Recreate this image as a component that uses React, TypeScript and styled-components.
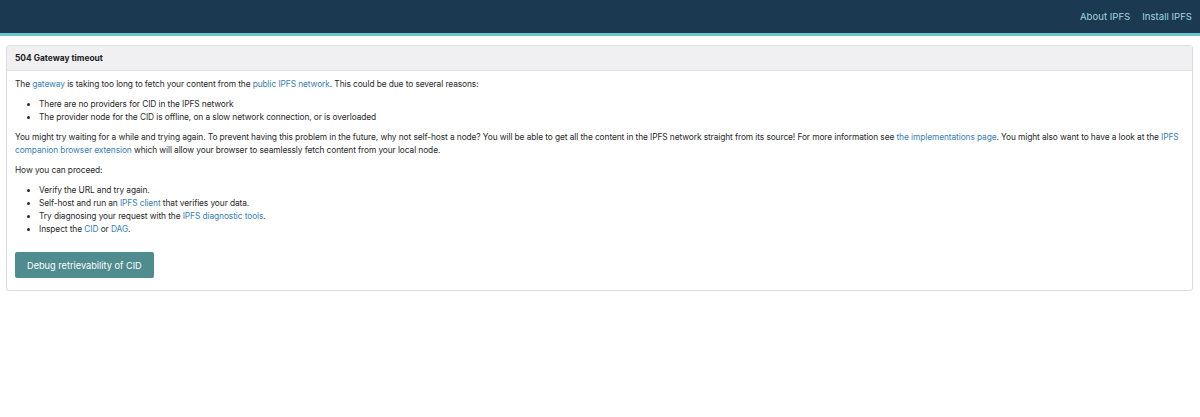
import React from "react";
import styled, { createGlobalStyle } from "styled-components";

const Global = createGlobalStyle`
  html, body { margin: 0; padding: 0; background: #ffffff; }
  body { font-family: Inter, "Noto Sans", "Liberation Sans", sans-serif; color: #222; }
  * { box-sizing: border-box; }
`;

const Header = styled.header`
  height: 36px;
  background: #1b3a52;
  border-bottom: 3px solid #6cc3cc;
  display: flex;
  align-items: center;
  justify-content: flex-end;
  padding: 0 8px 0 0;
  gap: 12px;
`;

const NavLink = styled.a`
  color: #9fd6dc;
  font-size: 9.6px;
  text-decoration: none;
  line-height: 1;
`;

const Main = styled.main`
  padding: 9px 7px 0 6px;
`;

const Card = styled.section`
  border: 1px solid #dcdde0;
  border-radius: 3px;
  background: #fff;
  box-shadow: 0 1px 2px rgba(0, 0, 0, 0.04);
`;

const CardHeader = styled.div`
  height: 25px;
  display: flex;
  align-items: center;
  padding: 0 8px;
  background: #f0f0f3;
  border-bottom: 1px solid #e1e2e6;
  font-size: 8.4px;
  font-weight: 700;
  color: #222;
`;

const CardBody = styled.div`
  padding: 7px 8px 12px;
  font-size: 8.4px;
  letter-spacing: -0.1px;
  line-height: 13px;
  color: #2a2a2a;
`;

const P = styled.p`
  margin: 0 0 7px;
`;

const List = styled.ul`
  margin: 0 0 7px;
  padding-left: 24px;
  list-style: disc;
`;

const Link = styled.a`
  color: #3b80b3;
  text-decoration: none;
`;

const Button = styled.button`
  display: block;
  margin-top: 16px;
  height: 26px;
  padding: 0 12px;
  border: none;
  border-radius: 2px;
  background: #4e8c90;
  color: #ffffff;
  font-family: inherit;
  font-size: 9.2px;
  letter-spacing: 0;
  cursor: pointer;
`;

export default function App() {
  return (
    <>
      <Global />
      <Header>
        <NavLink href="#">About IPFS</NavLink>
        <NavLink href="#">Install IPFS</NavLink>
      </Header>
      <Main>
        <Card>
          <CardHeader>504 Gateway timeout</CardHeader>
          <CardBody>
            <P>
              The <Link href="#">gateway</Link> is taking too long to fetch your content from the{" "}
              <Link href="#">public IPFS network</Link>. This could be due to several reasons:
            </P>
            <List>
              <li>There are no providers for CID in the IPFS network</li>
              <li>The provider node for the CID is offline, on a slow network connection, or is overloaded</li>
            </List>
            <P>
              You might try waiting for a while and trying again. To prevent having this problem in the future, why not
              self-host a node? You will be able to get all the content in the IPFS network straight from its source! For
              more information see <Link href="#">the implementations page</Link>. You might also want to have a look at
              the <Link href="#">IPFS companion browser extension</Link> which will allow your browser to seamlessly fetch
              content from your local node.
            </P>
            <P>How you can proceed:</P>
            <List>
              <li>Verify the URL and try again.</li>
              <li>
                Self-host and run an <Link href="#">IPFS client</Link> that verifies your data.
              </li>
              <li>
                Try diagnosing your request with the <Link href="#">IPFS diagnostic tools</Link>.
              </li>
              <li>
                Inspect the <Link href="#">CID</Link> or <Link href="#">DAG</Link>.
              </li>
            </List>
            <Button>Debug retrievability of CID</Button>
          </CardBody>
        </Card>
      </Main>
    </>
  );
}
